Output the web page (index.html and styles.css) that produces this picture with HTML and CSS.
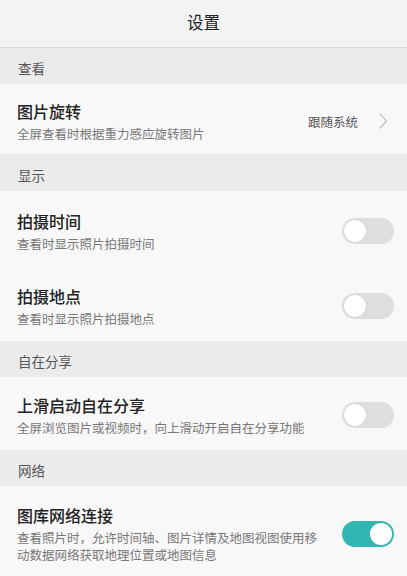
FILE: index.html
```html
<!DOCTYPE html>
<html lang="zh-CN">
<head>
<meta charset="utf-8">
<link rel="stylesheet" href="styles.css">
</head>
<body>
<div class="app">
  <header class="topbar">设置</header>

  <div class="section">查看</div>
  <div class="row row-first">
    <div class="texts">
      <div class="title">图片旋转</div>
      <div class="sub">全屏查看时根据重力感应旋转图片</div>
    </div>
    <div class="value">跟随系统</div>
    <svg class="chev" width="10" height="18" viewBox="0 0 10 18"><path d="M1.5 1.5 L8.5 9 L1.5 16.5" fill="none" stroke="#c4c4c4" stroke-width="1.3"/></svg>
  </div>

  <div class="section">显示</div>
  <div class="row row-a">
    <div class="texts">
      <div class="title">拍摄时间</div>
      <div class="sub">查看时显示照片拍摄时间</div>
    </div>
    <div class="toggle"><span class="knob"></span></div>
  </div>
  <div class="row row-b">
    <div class="texts">
      <div class="title">拍摄地点</div>
      <div class="sub">查看时显示照片拍摄地点</div>
    </div>
    <div class="toggle"><span class="knob"></span></div>
  </div>

  <div class="section">自在分享</div>
  <div class="row row-b">
    <div class="texts">
      <div class="title">上滑启动自在分享</div>
      <div class="sub">全屏浏览图片或视频时，向上滑动开启自在分享功能</div>
    </div>
    <div class="toggle"><span class="knob"></span></div>
  </div>

  <div class="section">网络</div>
  <div class="row row-last">
    <div class="texts">
      <div class="title">图库网络连接</div>
      <div class="sub">查看照片时，允许时间轴、图片详情及地图视图使用移动数据网络获取地理位置或地图信息</div>
    </div>
    <div class="toggle on"><span class="knob"></span></div>
  </div>
</div>
</body>
</html>
```

FILE: styles.css
```css
* { box-sizing: border-box; margin: 0; padding: 0; }
html, body { width: 407px; height: 576px; overflow: hidden; }
body {
  background: #f7f7f7;
  font-family: "Noto Sans CJK SC", "Noto Sans", sans-serif;
  color: #222;
}
.app { display: flex; flex-direction: column; }
.topbar {
  height: 48px;
  background: #f3f3f3;
  border-bottom: 1px solid #dcdcdc;
  display: flex;
  align-items: center;
  justify-content: center;
  font-size: 16.5px;
  color: #222;
  padding-bottom: 4px;
}
.section {
  height: 36px;
  background: #ebebeb;
  display: flex;
  align-items: center;
  padding-left: 18px;
  padding-top: 3px;
  font-size: 13.5px;
  color: #555;
}
.row {
  display: flex;
  align-items: center;
  background: #f8f8f8;
  padding: 2px 13px 0 17px;
}
.row-first { height: 71px; border-bottom: 1px solid #e6e6e6; padding-top: 3px; }
.row-a { height: 77px; padding-top: 3px; }
.row-b { height: 73px; }
.row-last { height: 90px; align-items: flex-start; padding-top: 18px; }
.texts { flex: 1; display: flex; flex-direction: column; }
.title {
  font-size: 16px;
  font-weight: 500;
  color: #222;
  line-height: 22px;
}
.sub {
  font-size: 12.5px;
  color: #777;
  line-height: 17px;
  margin-top: 3px;
}
.row-last .sub { width: 310px; }
.value {
  font-size: 12.5px;
  color: #555;
  margin-right: 20px;
  margin-top: 2px;
}
.chev { margin-right: 6px; margin-top: 1px; }
.toggle {
  width: 52px;
  height: 26px;
  border-radius: 13px;
  background: #dedede;
  position: relative;
  flex: none;
}
.row-last .toggle { margin-top: 17px; }
.knob {
  position: absolute;
  left: 2px;
  top: 2px;
  width: 22px;
  height: 22px;
  border-radius: 50%;
  background: #fff;
  box-shadow: 0 0 1px rgba(0,0,0,0.2);
}
.toggle.on { background: #33b6b2; }
.toggle.on .knob { left: auto; right: 2px; box-shadow: none; }
```
